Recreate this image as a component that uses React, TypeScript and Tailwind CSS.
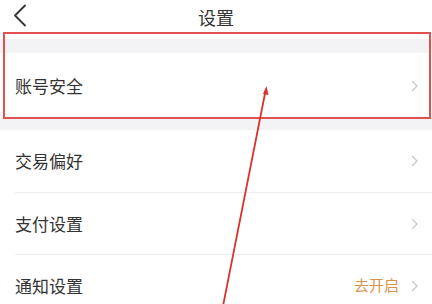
function Chevron() {
  return (
    <svg width="8" height="12" viewBox="0 0 8 12" className="shrink-0">
      <path d="M1.5 1.5 L6 6 L1.5 10.5" fill="none" stroke="#c9c9cc" strokeWidth="1.4" strokeLinecap="round" strokeLinejoin="round" />
    </svg>
  )
}

function Row({ label, extra, divider }: { label: string; extra?: string; divider?: boolean }) {
  return (
    <div className="bg-white pl-[15px]">
      <div className={`flex items-center h-[62px] pr-[13px] ${divider ? 'border-t border-[#ececee]' : ''}`}>
        <span className="flex-1 text-[17px] text-[#333]">{label}</span>
        {extra && <span className="text-[15px] text-[#d8944b] mr-[12px]">{extra}</span>}
        <Chevron />
      </div>
    </div>
  )
}

export default function App() {
  return (
    <div
      className="relative w-[432px] h-[304px] overflow-hidden bg-[#f3f3f5]"
      style={{ fontFamily: '"Noto Sans CJK SC", "Noto Sans", sans-serif' }}
    >
      <div className="relative h-[39px] bg-white flex justify-center">
        <svg className="absolute left-[12px] top-[3px]" width="16" height="24" viewBox="0 0 16 24">
          <path d="M13 2.5 L3 12.5 L13 22.5" fill="none" stroke="#333" strokeWidth="1.8" strokeLinecap="round" strokeLinejoin="round" />
        </svg>
        <span className="mt-[5px] text-[18px] leading-[24px] text-[#333]">设置</span>
      </div>
      <div className="h-[14px]" />
      <div className="bg-white h-[65px] flex items-center pl-[15px] pr-[13px]">
        <span className="flex-1 text-[17px] text-[#333]">账号安全</span>
        <Chevron />
      </div>
      <div className="h-[12px]" />
      <Row label="交易偏好" />
      <Row label="支付设置" divider />
      <Row label="通知设置" extra="去开启" divider />

      <div className="absolute left-[3px] top-[32px] w-[428px] h-[87px] border-2 border-[#e0514f]" />
      <svg className="absolute inset-0" width="432" height="304" viewBox="0 0 432 304">
        <line x1="265.5" y1="91" x2="223" y2="306" stroke="#d9332f" strokeWidth="1.8" />
        <path d="M266.5 86 L263 94 L268.5 95 Z" fill="#d9332f" />
      </svg>
    </div>
  )
}
